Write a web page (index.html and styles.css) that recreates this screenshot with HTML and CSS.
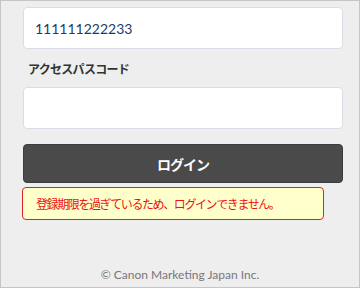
FILE: index.html
```html
<!DOCTYPE html>
<html lang="ja">
<head>
  <meta charset="UTF-8">
  <meta name="viewport" content="width=device-width, initial-scale=1.0">
  <title>ログイン</title>
  <link rel="stylesheet" href="styles.css">
</head>
<body>
  <div class="frame">
    <div class="login-form">
      <input type="text" class="field" value="111111222233">
      <p class="field-label">アクセスパスコード</p>
      <input type="password" class="field">
      <button class="login-btn">ログイン</button>
      <div class="error-box">登録期限を過ぎているため、ログインできません。</div>
    </div>
    <p class="footer">© Canon Marketing Japan Inc.</p>
  </div>
</body>
</html>
```

FILE: styles.css
```css
html, body {
  margin: 0;
  padding: 0;
}
body {
  font-family: Lato, "Noto Sans CJK JP", sans-serif;
  background-color: #eeeeee;
}
.frame {
  box-sizing: border-box;
  width: 360px;
  height: 288px;
  border: 1px solid #c6c6c6;
  background-color: #eeeeee;
  display: flex;
  flex-direction: column;
}
.login-form {
  padding: 6px 0 0 22px;
  display: flex;
  flex-direction: column;
  align-items: flex-start;
}
.field {
  box-sizing: border-box;
  width: 320px;
  height: 42px;
  margin: 0;
  padding: 0 11px;
  border: 1px solid #d8dde6;
  border-radius: 4px;
  background: white;
  font-family: Lato, sans-serif;
  font-size: 14px;
  color: #1f3a66;
  outline: none;
}
.field-label {
  margin: 12px 0 8px 5px;
  line-height: 18px;
  font-size: 12px;
  font-weight: bold;
  letter-spacing: -0.7px;
  color: #333333;
}
.login-btn {
  box-sizing: border-box;
  width: 320px;
  height: 39px;
  margin-top: 15px;
  border: 1px solid #3c3c3c;
  border-radius: 4px;
  background-color: #4a4a4a;
  color: white;
  font-family: "Noto Sans CJK JP", sans-serif;
  font-size: 14px;
  font-weight: bold;
  letter-spacing: -1px;
  cursor: pointer;
}
.error-box {
  box-sizing: border-box;
  width: 302px;
  height: 33px;
  margin: 4px 0 0 -1px;
  padding: 0 13px;
  border: 1px solid #e02424;
  border-radius: 4px;
  background-color: #ffffcc;
  color: #ee1111;
  font-family: "Noto Sans CJK JP", sans-serif;
  font-size: 12px;
  letter-spacing: -1.4px;
  line-height: 31px;
}
.footer {
  margin: auto 0 0 0;
  padding-bottom: 4px;
  text-align: center;
  font-size: 12px;
  line-height: 16px;
  color: #777777;
}
```
